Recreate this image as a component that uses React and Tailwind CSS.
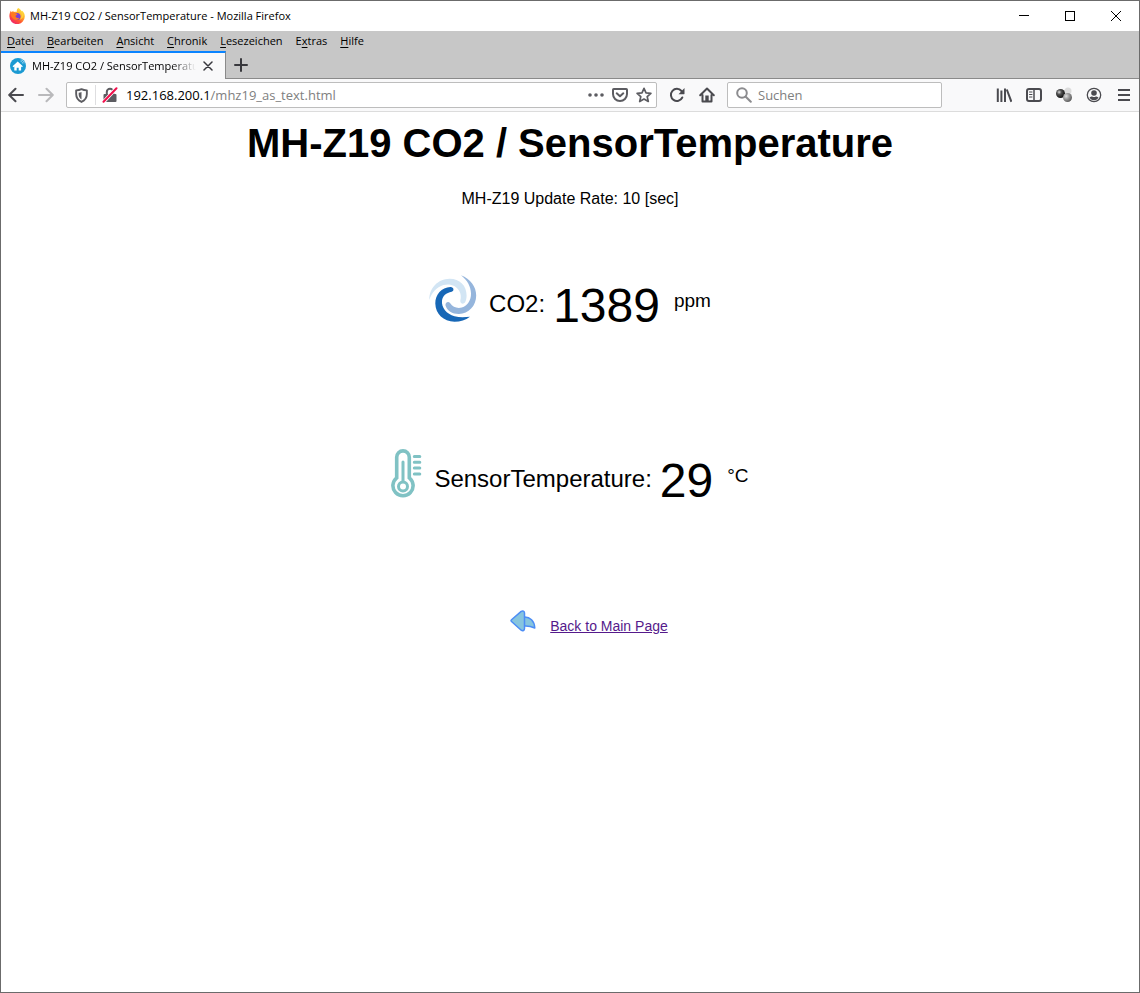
import React from "react";

const MENU = [
  ["", "D", "atei"],
  ["", "B", "earbeiten"],
  ["", "A", "nsicht"],
  ["", "C", "hronik"],
  ["", "L", "esezeichen"],
  ["E", "x", "tras"],
  ["", "H", "ilfe"],
];

function Icon({ children, className = "size-4", box = "0 0 16 16" }) {
  return (
    <svg viewBox={box} className={`${className} shrink-0`} fill="none" stroke="currentColor" strokeWidth="2" strokeLinecap="round" strokeLinejoin="round" aria-hidden="true">
      {children}
    </svg>
  );
}

function ToolButton({ label, children, className = "" }) {
  return (
    <button type="button" aria-label={label} className={`flex size-5 shrink-0 items-center justify-center ${className}`}>
      {children}
    </button>
  );
}

function FirefoxLogo() {
  return (
    <svg viewBox="0 0 16 16" className="size-4 shrink-0" aria-hidden="true">
      <defs>
        <linearGradient id="flame" x1="0.85" y1="0.05" x2="0.2" y2="0.95">
          <stop offset="0" stopColor="#fff04a" />
          <stop offset="0.35" stopColor="#ffb02a" />
          <stop offset="0.65" stopColor="#ff5a30" />
          <stop offset="1" stopColor="#f0206a" />
        </linearGradient>
      </defs>
      <path fill="url(#flame)" d="M9.2 0c2 .8 3 2.4 3.5 3.5l.5-.8c1.700 1.300 2.600 3.500 2.600 5.700A7.600 7.600 0 0 1 .4 8.500C.3 6.200 1 4 2 2.600l.5 1.600L4.300 2.700l.4 1.500c1.200-.6 2.200-.4 3-.2C7.600 2.500 8 1 9.200 0z" />
      <circle cx="8" cy="8.500" r="3.500" fill="#7a3fd8" />
      <path fill="#ff7a20" d="M1.800 5c2-1.200 3.800-.8 5 .4l1.700.5c-.2 1-1.600 1.200-2 2 .2 1.800 2 2.600 3.800 2-1 2-3.800 2.600-5.600 1.300C2.800 10 1.500 7.500 1.800 5z" />
      <path fill="#ffd23a" d="M9 1.200c1.300 1.600 3.400 2.500 3.700 5.300.2 2.300-.8 4-2.200 5.200 2.800-.6 4.200-3 3.900-5.400C14 4 11.500 2.500 9 1.200z" />
    </svg>
  );
}

function HomeFavicon() {
  return (
    <svg viewBox="0 0 16 16" className="size-4 shrink-0" aria-hidden="true">
      <circle cx="8" cy="8" r="8" fill="#1b9ad2" />
      <path fill="#fff" d="M7.700 3.600 2.600 8.300l.8.900.9-.8v4.200h2.400V9.700h2v2.900h2.400V8.400l.9.800.8-.9z" />
      <path d="M10.500 3.200c1.300.2 2.200 1.200 2.400 2.500M10.700 1.800c1.900.3 3.300 1.600 3.600 3.500" fill="none" stroke="#bce3f4" strokeWidth=".7" />
    </svg>
  );
}

function SwirlIcon() {
  return (
    <svg viewBox="0 0 48 48" className="size-12 shrink-0" aria-hidden="true">
      <path fill="#d2e5f4" d="M.3 25C.2 13 9 4 20.500 3.800 30.500 3.700 37.800 10.500 37.600 20.500c0 3-.6 5-1.600 7-1.800 2.300-5.200.8-4.700-2 .8-3 .9-6.500-1.300-10C27 10.500 21 8.200 14.500 10 7.500 12 2.800 17.500.3 25z" />
      <path fill="#95b5dc" d="M32 .2C41.500 4 47.200 11.500 47.200 20.500c0 10.500-7.700 18.300-17.200 18.500-6.500.1-12-3.300-13.500-8.500-.5-3.200 3-4.600 4.700-2.200 2.500 3.700 7 5.500 11.600 4.200 6-1.800 9.300-7.500 9.200-14C41.900 11.500 38.300 5 32 .2z" />
      <path fill="#1767b6" d="M21.500 12c3.400-.1 4 4 1.200 4.800-5.500 1-9.200 4.200-9.700 9-.7 7 4.500 13.200 12.500 15.500 5 1.300 10.500 1 15.500.4-4.500 3.300-9.500 5-15.500 5C14.500 46.500 6.500 39 6.300 28.500 6.200 19.500 12.500 12.600 21.500 12z" />
    </svg>
  );
}

function ThermometerIcon() {
  return (
    <svg viewBox="0 0 31 50" className="h-[50px] w-[31px] shrink-0" fill="none" stroke="#80c2c4" strokeLinecap="round" aria-hidden="true">
      <path strokeWidth="3.600" d="M5.700 28.800V8.200a6.300 6.300 0 0 1 12.600 0v20.600a10.100 10.100 0 1 1-12.600 0z" />
      <path strokeWidth="3" d="M12 13v19" />
      <circle cx="12" cy="37.500" r="4.500" strokeWidth="3" />
      <path strokeWidth="3" d="M23.300 7.500h5.500M23.300 13.300h5.500M23.300 19.100h5.500M23.300 24.900h5.500" />
    </svg>
  );
}

function BackIcon() {
  return (
    <svg viewBox="0 0 26 22" className="h-[22px] w-[26px] shrink-0" fill="#87c5de" stroke="#4c8df5" strokeWidth="1.500" strokeLinejoin="round" aria-hidden="true">
      <path d="M14 7c6-.4 10.500 4 10.800 11-3.300-1.500-6.500-2.400-10.800-2z" />
      <path d="M1.500 9.700 11.200 1.400c1.600-.9 3.300-.3 3.300 1.600v15.500c0 2-1.700 2.800-3.300 1.700L1.500 11.500q-1-.9 0-1.800z" />
    </svg>
  );
}

function Reading({ icon, label, value, unit }) {
  return (
    <section className="flex h-16 items-center text-2xl">
      <div className="pr-3 pb-4">{icon}</div>
      <span className="pr-2 pb-[6px]">{label}</span>
      <span className="pr-[14px] pb-[2px] text-5xl">{value}</span>
      <span className="pb-3 text-[19px]">{unit}</span>
    </section>
  );
}

export default function App() {
  return (
    <div className="flex min-h-screen flex-col border border-[#6b6b6b] bg-white font-['Noto_Sans',sans-serif] text-[12px] text-black">
      <header>
        <div className="flex h-[30px] items-center bg-white pl-2">
          <FirefoxLogo />
          <span className="grow pl-[5px] font-['Open_Sans',sans-serif] text-[11px]">MH-Z19 CO2 / SensorTemperature - Mozilla Firefox</span>
          <button type="button" aria-label="Minimieren" className="flex h-full w-[46px] items-center justify-center">
            <svg viewBox="0 0 10 10" className="size-[10px]" stroke="#000" shapeRendering="crispEdges"><path d="M0 4.500h10" /></svg>
          </button>
          <button type="button" aria-label="Maximieren" className="flex h-full w-[46px] items-center justify-center">
            <svg viewBox="0 0 10 10" className="size-[10px]" fill="none" stroke="#000" shapeRendering="crispEdges"><path d="M.5.5h9v9h-9z" /></svg>
          </button>
          <button type="button" aria-label="Schließen" className="flex h-full w-[46px] items-center justify-center">
            <svg viewBox="0 0 10 10" className="size-[10px]" stroke="#000"><path d="M0 0l10 10M10 0L0 10" /></svg>
          </button>
        </div>

        <nav className="flex h-5 items-center gap-[13px] bg-[#c7c7c7] pl-[6px] font-['Open_Sans',sans-serif]">
          {MENU.map(([pre, key, post]) => (
            <button type="button" key={key + post} className="text-[11px]">
              {pre}<span className="underline underline-offset-2">{key}</span>{post}
            </button>
          ))}
        </nav>

        <div className="flex h-7 bg-[#c7c7c7]">
          <div className="flex w-[225px] items-center border-t-2 border-r border-t-[#0a84ff] border-r-[#8a8a8a] bg-[#f9f9fa] pl-[9px]">
            <HomeFavicon />
            <span className="ml-[6px] w-[164px] overflow-hidden font-['Open_Sans',sans-serif] text-[11px] whitespace-nowrap [mask-image:linear-gradient(to_right,black_85%,transparent)]">
              MH-Z19 CO2 / SensorTemperature
            </span>
            <button type="button" aria-label="Tab schließen" className="ml-[7px] text-[#38383d]">
              <Icon className="size-[10px]" box="0 0 10 10"><path strokeWidth="1.500" d="M1 1l8 8M9 1L1 9" /></Icon>
            </button>
          </div>
          <div className="flex grow items-center border-b border-[#8a8a8a] pl-2">
            <button type="button" aria-label="Neuer Tab" className="text-[#38383d]">
              <Icon className="size-[14px]" box="0 0 14 14"><path d="M7 1v12M1 7h12" /></Icon>
            </button>
          </div>
        </div>

        <div className="flex h-[33px] items-center border-b border-[#dcdcdc] bg-[#f9f9fa] pr-[5px] pl-[5px] text-[#4a4a4f]">
          <ToolButton label="Zurück">
            <Icon><path d="M15 8H1.500M7.500 1.700 1.200 8l6.300 6.300" /></Icon>
          </ToolButton>
          <ToolButton label="Vor" className="ml-[10px] text-[#b9b9bb]">
            <Icon><path d="M1 8h13.500M8.500 1.700 14.800 8l-6.300 6.300" /></Icon>
          </ToolButton>

          <div className="ml-[10px] flex h-[26px] max-w-[591px] grow items-center rounded-xs border border-[#bdbdbd] bg-white pr-[2px] pl-1 text-[#5c5c61]">
            <ToolButton label="Schutz">
              <Icon className="size-[15px]"><path d="M8 1.200c2 .9 3.800 1.200 5.700 1.300v4c0 4-2.200 6.800-5.700 8.400-3.500-1.600-5.700-4.400-5.700-8.400v-4C4.200 2.400 6 2.100 8 1.200z" /><path fill="currentColor" stroke="none" d="M8 4.200c-1 .5-2 .7-3 .8v2c0 2.300 1 4 3 5.200z" /></Icon>
            </ToolButton>
            <span className="mx-1 h-5 border-l border-[#dedee0]" />
            <ToolButton label="Verbindung ist nicht sicher">
              <Icon><path d="M4.800 7V5a3.200 3.200 0 0 1 6.400 0v2" /><rect x="1.500" y="7" width="13" height="8" rx="1" fill="currentColor" stroke="none" /><path stroke="#fff" strokeWidth="3.500" d="M2 14.500 14 1.500" /><path stroke="#f0104c" strokeWidth="2" d="M1.500 14.800 14.500 1.200" /></Icon>
            </ToolButton>
            <a href="#top" className="ml-[6px] grow pt-[2px] font-['Open_Sans',sans-serif] text-[13px] text-[#808080]"><span className="text-black">192.168.200.1</span>/mhz19_as_text.html</a>
            <ToolButton label="Seitenaktionen">
              <Icon><g fill="currentColor" stroke="none"><circle cx="2" cy="8" r="1.800" /><circle cx="8" cy="8" r="1.800" /><circle cx="14" cy="8" r="1.800" /></g></Icon>
            </ToolButton>
            <ToolButton label="Bei Pocket speichern" className="ml-1">
              <Icon><path d="M1.800 2h12.400q.8 0 .8.800V7a7 7 0 0 1-14 0V2.800q0-.8.800-.8z" /><path d="M4.700 6.300 8 9.300l3.300-3" /></Icon>
            </ToolButton>
            <ToolButton label="Lesezeichen setzen" className="ml-1">
              <Icon><path strokeWidth="1.700" d="m8 1.300 2 4.500 4.900.5-3.700 3.300 1.100 4.900L8 12l-4.300 2.500 1.100-4.900L1.100 6.300 6 5.800z" /></Icon>
            </ToolButton>
          </div>

          <ToolButton label="Neu laden" className="ml-[10px]">
            <Icon><path d="M13.300 10.500A6 6 0 1 1 12.500 4" /><path fill="currentColor" stroke="none" d="M15.500 1v5.800q0 .4-.5.400H9.500z" /></Icon>
          </ToolButton>
          <ToolButton label="Startseite" className="ml-[10px]">
            <Icon><path d="M1.200 8.200 8 1.500l6.800 6.700M3.500 8v6.500h9V8" /><path fill="currentColor" stroke="none" d="M6.300 8.500h3.400V14H6.300z" /></Icon>
          </ToolButton>

          <label className="ml-[10px] flex h-[26px] w-[215px] items-center rounded-xs border border-[#bdbdbd] bg-white pl-2 text-[#8c8c8f]">
            <Icon><circle cx="6" cy="6" r="4.800" /><path d="m9.800 9.800 5 5" /></Icon>
            <input type="text" aria-label="Suchen" placeholder="Suchen" className="ml-[6px] w-full min-w-0 bg-transparent pt-[2px] font-['Open_Sans',sans-serif] text-[13px] outline-none placeholder:text-[#808080]" />
          </label>

          <div className="ml-auto flex gap-[10px]">
            <ToolButton label="Bibliothek">
              <Icon><path strokeLinecap="butt" d="M1.800 1.500V15M5.400 3.500V15M9 1.500V15M10.800 2.500l4.600 12.300" /></Icon>
            </ToolButton>
            <ToolButton label="Sidebars">
              <Icon><rect x="1" y="2" width="14" height="12" rx="2" /><path d="M8 2v12" strokeWidth="1.500" /><path d="M3.500 5H6M3.500 7.500H6M3.500 10H6" strokeWidth="1" /></Icon>
            </ToolButton>
            <ToolButton label="Erweiterung">
              <svg viewBox="0 0 16 16" className="size-4" aria-hidden="true">
                <defs>
                  <radialGradient id="dark" cx=".35" cy=".35" r=".7"><stop offset="0" stopColor="#ddd" /><stop offset=".35" stopColor="#555" /><stop offset="1" stopColor="#080808" /></radialGradient>
                  <radialGradient id="gray" cx=".35" cy=".35" r=".7"><stop offset="0" stopColor="#e0e0e0" /><stop offset=".5" stopColor="#969696" /><stop offset="1" stopColor="#585858" /></radialGradient>
                </defs>
                <circle cx="12" cy="4" r="3.500" fill="#dcdcdc" />
                <circle cx="4.500" cy="6.500" r="4.500" fill="url(#dark)" />
                <circle cx="11.500" cy="10.500" r="4.500" fill="url(#gray)" />
              </svg>
            </ToolButton>
            <ToolButton label="Konto">
              <Icon><circle cx="8" cy="8" r="6.700" strokeWidth="1.300" /><g fill="currentColor" stroke="none"><circle cx="8" cy="6" r="2.800" /><path d="M3.500 10.200c1 .2 1.700-.7 2.700-.7.9.7 2.700.7 3.600 0 1 0 1.700.9 2.700.7-.7 2-2.300 3-4.500 3s-3.800-1-4.500-3z" /></g></Icon>
            </ToolButton>
            <ToolButton label="Menü">
              <Icon><path strokeLinecap="butt" d="M2 3h12M2 8h12M2 13h12" /></Icon>
            </ToolButton>
          </div>
        </div>
      </header>

      <main id="top" className="flex flex-col items-center pt-[7px] font-['Liberation_Sans',Arial,sans-serif]">
        <h1 className="text-[40px] leading-[48px] font-bold">MH-Z19 CO2 / SensorTemperature</h1>
        <p className="mt-5 text-base">MH-Z19 Update Rate: 10 [sec]</p>
        <div className="mt-16 flex flex-col items-center gap-[111px]">
          <Reading icon={<SwirlIcon />} label="CO2:" value="1389" unit="ppm" />
          <Reading icon={<ThermometerIcon />} label="SensorTemperature:" value="29" unit="°C" />
        </div>
        <div className="mt-24 flex items-center gap-[14px] pl-[38px] text-sm">
          <div className="pb-[10px]"><BackIcon /></div>
          <a href="#main" className="text-[#551a8b] underline">Back to Main Page</a>
        </div>
      </main>
    </div>
  );
}
